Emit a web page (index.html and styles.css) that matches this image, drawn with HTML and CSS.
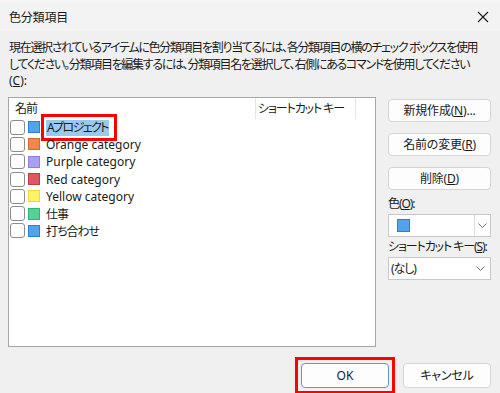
FILE: index.html
```html
<!DOCTYPE html>
<html lang="ja">

<head>
    <meta charset="UTF-8">
    <meta name="viewport" content="width=device-width, initial-scale=1.0">
    <title>色分類項目</title>
    <link rel="stylesheet" href="styles.css">
</head>

<body>
    <div class="dialog">
        <div class="titlebar">
            <span class="title">色分類項目</span>
            <svg class="close" width="12" height="12" viewBox="0 0 12 12">
                <path d="M1 1 L11 11 M11 1 L1 11" stroke="#1a1a1a" stroke-width="1.1" fill="none" />
            </svg>
        </div>

        <p class="desc">
            <span class="line">現在選択されているアイテムに色分類項目を割り当てるには、各分類項目の横のチェック ボックスを使用</span>
            <span class="line">してください。分類項目を編集するには、分類項目名を選択して、右側にあるコマンドを使用してください</span>
            <span class="line latin">(<u>C</u>):</span>
        </p>

        <div class="main">
            <div class="listbox">
                <div class="list-header">
                    <div class="col-name">名前</div>
                    <div class="col-key">ショートカット キー</div>
                    <div class="col-rest"></div>
                </div>
                <div class="row">
                    <span class="check"></span>
                    <span class="swatch blue"></span>
                    <span class="marked"><span class="selected">Aプロジェクト</span></span>
                </div>
                <div class="row">
                    <span class="check"></span>
                    <span class="swatch orange"></span>
                    <span class="label latin">Orange category</span>
                </div>
                <div class="row">
                    <span class="check"></span>
                    <span class="swatch purple"></span>
                    <span class="label latin">Purple category</span>
                </div>
                <div class="row">
                    <span class="check"></span>
                    <span class="swatch red"></span>
                    <span class="label latin">Red category</span>
                </div>
                <div class="row">
                    <span class="check"></span>
                    <span class="swatch yellow"></span>
                    <span class="label latin">Yellow category</span>
                </div>
                <div class="row">
                    <span class="check"></span>
                    <span class="swatch green"></span>
                    <span class="label">仕事</span>
                </div>
                <div class="row">
                    <span class="check"></span>
                    <span class="swatch blue"></span>
                    <span class="label">打ち合わせ</span>
                </div>
            </div>

            <div class="side">
                <button class="btn">新規作成(<u>N</u>)...</button>
                <button class="btn">名前の変更(<u>R</u>)</button>
                <button class="btn">削除(<u>D</u>)</button>

                <div class="field-label">色(<u>O</u>):</div>
                <div class="combo">
                    <div class="combo-value"><span class="swatch blue big"></span></div>
                    <div class="combo-arrow">
                        <svg width="9" height="5" viewBox="0 0 9 5">
                            <path d="M0.5 0.5 L4.5 4.5 L8.5 0.5" stroke="#707070" fill="none" />
                        </svg>
                    </div>
                </div>

                <div class="field-label">ショートカット キー(<u>S</u>):</div>
                <div class="combo plain">
                    <div class="combo-value">(なし)</div>
                    <div class="combo-arrow">
                        <svg width="9" height="5" viewBox="0 0 9 5">
                            <path d="M0.5 0.5 L4.5 4.5 L8.5 0.5" stroke="#707070" fill="none" />
                        </svg>
                    </div>
                </div>
            </div>
        </div>

        <div class="footer">
            <span class="ok-mark"><button class="btn ok">OK</button></span>
            <button class="btn cancel">キャンセル</button>
        </div>
    </div>
</body>

</html>
```

FILE: styles.css
```css
body {
    margin: 0;
    background-color: #f0f0f0;
    font-family: "Noto Sans", "Noto Sans CJK JP", sans-serif;
    font-size: 12px;
    color: #1a1a1a;
    font-feature-settings: "palt";
    letter-spacing: -1.1px;
}

.dialog {
    width: 500px;
    height: 393px;
    box-sizing: border-box;
    border-top: 2px solid #f8f8f8;
}

.titlebar {
    height: 29px;
    display: flex;
    align-items: center;
    justify-content: space-between;
    padding: 0 11px 0 9px;
    background-color: #f3f3f3;
}

.title {
    font-size: 12px;
    letter-spacing: -0.2px;
}

.desc {
    margin: 9px 0 0;
    padding: 0 9px;
    line-height: 16.5px;
    letter-spacing: -1.3px;
}

.desc .line {
    display: block;
    white-space: nowrap;
}

.main {
    display: flex;
    gap: 12px;
    margin-top: 7px;
    padding: 0 9px 0 8px;
}

.listbox {
    width: 368px;
    height: 250px;
    box-sizing: border-box;
    border: 1px solid #a6a6a6;
    background-color: #fff;
}

.list-header {
    display: flex;
    height: 21px;
    line-height: 21px;
    white-space: nowrap;
}

.col-name {
    width: 247px;
    padding-left: 6px;
    box-sizing: border-box;
    border-right: 1px solid #e5e5e5;
}

.col-key {
    width: 100px;
    padding-left: 2px;
    box-sizing: border-box;
    border-right: 1px solid #e5e5e5;
}

.row {
    display: flex;
    align-items: center;
    height: 17.3px;
    padding-left: 1px;
}

.check {
    width: 15px;
    height: 15px;
    box-sizing: border-box;
    border: 1px solid #8c8c8c;
    border-radius: 3px;
    background-color: #fff;
}

.swatch {
    width: 12px;
    height: 12px;
    box-sizing: border-box;
    margin-left: 3px;
    border: 1px solid;
}

.swatch.big {
    width: 13px;
    height: 13px;
    margin-left: 0;
}

.blue {
    background-color: #52a3ec;
    border-color: #2f7fd0;
}

.orange {
    background-color: #f0874c;
    border-color: #d8662c;
}

.purple {
    background-color: #ab9ff2;
    border-color: #8d80e0;
}

.red {
    background-color: #de5861;
    border-color: #c23a44;
}

.yellow {
    background-color: #fff36a;
    border-color: #f0d83a;
}

.green {
    background-color: #56d297;
    border-color: #30b575;
}

.label {
    margin-left: 6px;
}

.latin,
.desc .latin {
    letter-spacing: 0;
}

.marked {
    display: inline-block;
    margin: -6px -9px -6px 1px;
    padding: 3px 5px 2px 2px;
    border: 3px solid #ff0000;
}

.selected {
    display: block;
    background-color: #99c9ef;
    line-height: 16px;
    padding: 0 1px;
    letter-spacing: -1.6px;
}

.side {
    width: 103px;
    display: flex;
    flex-direction: column;
    padding-top: 2px;
    white-space: nowrap;
}

.btn {
    font: inherit;
    color: inherit;
    letter-spacing: -0.2px;
    height: 23px;
    margin-bottom: 11px;
    border: 1px solid #d4d4d4;
    border-radius: 4px;
    background-color: #fdfdfd;
    padding: 0;
}

.field-label {
    margin-top: -5px;
    line-height: 16px;
    height: 16px;
    margin-bottom: 2px;
}

.combo {
    display: flex;
    height: 23px;
    box-sizing: border-box;
    border: 1px solid #c8c8c8;
    background-color: #fff;
    margin-bottom: 7px;
}

.combo-value {
    flex: 1;
    display: flex;
    align-items: center;
    padding-left: 8px;
}

.combo-arrow {
    width: 15px;
    display: flex;
    align-items: center;
    justify-content: center;
    border-left: 1px solid #dcdcdc;
}

.combo.plain .combo-value {
    padding-left: 2px;
}

.combo.plain .combo-arrow {
    border-left: none;
    width: 20px;
}

.footer {
    display: flex;
    justify-content: flex-end;
    align-items: center;
    gap: 8px;
    margin-top: 10px;
    padding-right: 9px;
}

.ok-mark {
    display: inline-flex;
    padding: 3px;
    border: 3px solid #ff0000;
}

.btn.ok {
    width: 88px;
    height: 25px;
    margin: 0;
    border-color: #5b9bd5;
    letter-spacing: 0;
}

.btn.cancel {
    width: 88px;
    height: 25px;
    margin: 0;
}
```
